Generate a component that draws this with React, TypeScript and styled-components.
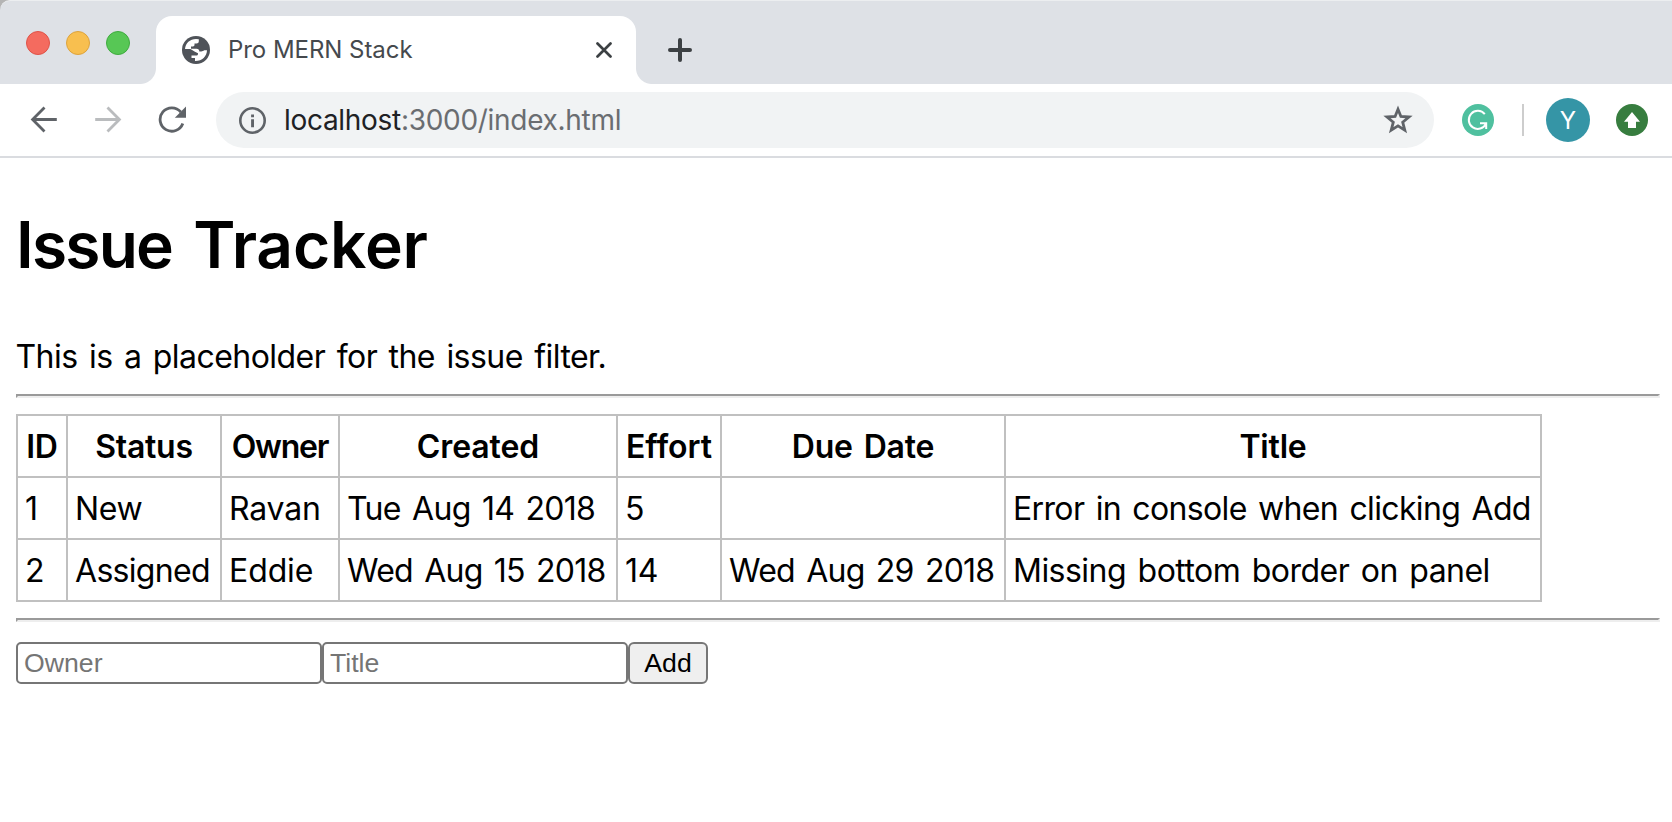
import React from "react";
import styled, { createGlobalStyle } from "styled-components";

const GlobalStyle = createGlobalStyle`
  * { box-sizing: border-box; }
  html { background: #fff; }
  body { margin: 0; background: #fff; color: #000; font-family: Inter, "Liberation Sans", sans-serif; }
`;

const Window = styled.div`
  width: 1672px;
  height: 822px;
  overflow: hidden;
  background: #fff;
`;

const Backdrop = styled.div`
  background: #b4b4b4;
`;

const TabStrip = styled.div`
  display: flex;
  align-items: flex-end;
  height: 84px;
  padding-left: 26px;
  background: #dee1e6;
  border-top: 1px solid #eceef0;
  border-radius: 10px 0 0 0;
`;

const TrafficLights = styled.div`
  display: flex;
  align-self: flex-start;
  gap: 16px;
  width: 130px;
  margin-top: 30px;
`;

const Light = styled.span<{ $fill: string; $edge: string }>`
  width: 24px;
  height: 24px;
  border-radius: 50%;
  background: ${(p) => p.$fill};
  border: 1px solid ${(p) => p.$edge};
`;

const Tab = styled.div`
  position: relative;
  display: flex;
  align-items: center;
  width: 480px;
  height: 68px;
  padding: 0 24px 0 26px;
  background: #fff;
  border-radius: 16px 16px 0 0;

  &::before,
  &::after {
    content: "";
    position: absolute;
    bottom: 0;
    width: 16px;
    height: 16px;
  }
  &::before {
    left: -16px;
    background: radial-gradient(circle at 0 0, transparent 15.5px, #fff 16.5px);
  }
  &::after {
    right: -16px;
    background: radial-gradient(circle at 100% 0, transparent 15.5px, #fff 16.5px);
  }
`;

const TabTitle = styled.span`
  flex: 1;
  margin-left: 18px;
  font-size: 24px;
  line-height: 30px;
  letter-spacing: -0.05px;
  color: #45494d;
`;

const NewTab = styled.div`
  display: flex;
  align-items: center;
  height: 68px;
  margin-left: 32px;
`;

const Toolbar = styled.div`
  display: flex;
  align-items: center;
  height: 74px;
  padding: 0 24px 2px 30px;
  border-bottom: 2px solid #dadce0;
`;

const NavIcons = styled.div`
  display: flex;
  gap: 36px;
  width: 186px;
`;

const Omnibox = styled.div`
  display: flex;
  align-items: center;
  width: 1218px;
  height: 56px;
  padding: 0 21px 0 22px;
  margin-top: 2px;
  background: #f1f3f4;
  border-radius: 28px;
`;

const Url = styled.span`
  flex: 1;
  margin-left: 18px;
  font-size: 28px;
  line-height: 36px;
  letter-spacing: -0.3px;
  color: #6a6d71;
`;

const Host = styled.span`
  color: #202124;
`;

const Extensions = styled.div`
  display: flex;
  align-items: center;
  margin: 2px 0 0 28px;
`;

const Divider = styled.span`
  width: 2px;
  height: 32px;
  margin: 0 22px 0 28px;
  background: #cdcdcd;
`;

const Avatar = styled.span`
  width: 44px;
  height: 44px;
  margin-right: 26px;
  border-radius: 50%;
  background: #3595a6;
  color: #fff;
  font-size: 24px;
  line-height: 45px;
  text-align: center;
`;

const Page = styled.main`
  padding: 0 12px 0 16px;
`;

const Heading = styled.h1`
  margin: 42px 0 44px;
  font-size: 64px;
  font-weight: 600;
  line-height: 90px;
  word-spacing: 5px;
`;

const HeadingWord = styled.span<{ $tracking: number }>`
  letter-spacing: ${(p) => p.$tracking}px;
`;

const Filter = styled.div`
  padding-top: 2px;
  font-size: 32px;
  line-height: 42px;
  height: 44px;
  letter-spacing: -0.55px;
  word-spacing: 3px;
  text-indent: -0.5px;
`;

const Rule = styled.hr`
  height: 4px;
  margin: 16px 0;
  border: 2px solid;
  border-color: #9a9a9a #eee #eee #9a9a9a;
`;

const Table = styled.table`
  width: 1526px;
  table-layout: fixed;
  border-collapse: collapse;
  font-size: 32px;
  line-height: 44px;
  white-space: nowrap;
`;

const Column = styled.col<{ $width: number }>`
  width: ${(p) => p.$width}px;
`;

const HeadCell = styled.th<{ $tracking: number }>`
  height: 62px;
  padding: 2px 0 0;
  border: 2px solid #c0c0c0;
  font-weight: 600;
  text-align: center;
  letter-spacing: ${(p) => p.$tracking}px;
  word-spacing: 3px;
`;

const Cell = styled.td<{ $tracking: number }>`
  height: 62px;
  padding: 2px 0 0 7px;
  border: 2px solid #c0c0c0;
  letter-spacing: ${(p) => p.$tracking}px;
  word-spacing: 3px;
`;

const Form = styled.form`
  display: flex;
  margin-top: 20px;
`;

const Field = styled.input`
  width: 306px;
  height: 42px;
  padding: 2px 6px;
  border: 2px solid #767676;
  border-radius: 5px;
  background: #fff;
  font: 26.67px "Liberation Sans", Arial, sans-serif;

  &::placeholder {
    color: #757575;
    opacity: 1;
  }
`;

const AddButton = styled.button`
  width: 80px;
  height: 42px;
  padding: 0;
  border: 2px solid #767676;
  border-radius: 6px;
  background: #efefef;
  color: #000;
  font: 26.67px "Liberation Sans", Arial, sans-serif;
`;

const columns = [
  { label: "ID", width: 50, tracking: -0.3 },
  { label: "Status", width: 154, tracking: -0.3 },
  { label: "Owner", width: 118, tracking: -1.2 },
  { label: "Created", width: 278, tracking: -0.1 },
  { label: "Effort", width: 104, tracking: 0 },
  { label: "Due Date", width: 284, tracking: -0.2 },
  { label: "Title", width: 536, tracking: -0.2 },
];

type CellData = [text: string, tracking: number];

const issues: CellData[][] = [
  [["1", 0], ["New", -0.4], ["Ravan", -0.2], ["Tue Aug 14 2018", -0.7], ["5", 0], ["", 0], ["Error in console when clicking Add", -0.65]],
  [["2", 0], ["Assigned", -0.7], ["Eddie", -0.1], ["Wed Aug 15 2018", -0.75], ["14", -0.3], ["Wed Aug 29 2018", -0.75], ["Missing bottom border on panel", -0.52]],
];

const GlobeIcon = () => (
  <svg width="28" height="28" viewBox="0 0 28 28">
    <circle cx="14" cy="14" r="14" fill="#4f5359" />
    <path
      d="M3 13C3.400 7.200 8 3 14 3l2.800.3v1.900c0 1.300-1 2.300-2.300 2.300h-2v1.300c0 .9-.7 1.600-1.600 1.600H9v2.400h5.500c1.900 0 2.800 1.100 2.800 2.700h1.900c1.200 0 2.200-.5 3-1.200H25C24.800 20.500 20 25.200 13 25v-3H9.500v-2.500h5c.9 0 1.500-.6 1.500-1.500v-.8L12.500 15.500 8.500 13Z"
      fill="#fff"
    />
  </svg>
);

const CloseIcon = () => (
  <svg width="16" height="16" viewBox="0 0 16 16" stroke="#3c4043" strokeWidth="2.700" strokeLinecap="round">
    <path d="M1.500 1.500 14.500 14.500M14.500 1.500 1.500 14.500" />
  </svg>
);

const PlusIcon = () => (
  <svg width="24" height="24" viewBox="0 0 24 24" stroke="#3c4043" strokeWidth="4" strokeLinecap="round">
    <path d="M12 2v20M2 12h20" />
  </svg>
);

const BackIcon = () => (
  <svg width="28" height="28" viewBox="0 0 28 28" fill="none" stroke="#5f6368" strokeWidth="2.800">
    <path d="M26.800 14.500H3M14.500 2.500 2.600 14.500l11.900 12" />
  </svg>
);

const ForwardIcon = () => (
  <svg width="28" height="28" viewBox="0 0 28 28" fill="none" stroke="#babcbe" strokeWidth="2.800">
    <path d="M1.200 14.500h24M13.500 2.500l11.900 12-11.900 12" />
  </svg>
);

const ReloadIcon = () => (
  <svg width="28" height="28" viewBox="0 0 28 28">
    <path d="M24.800 18.500A11.700 11.700 0 1 1 22.800 7" fill="none" stroke="#5f6368" strokeWidth="2.800" />
    <path d="M28 1.500v11.200H16.800z" fill="#5f6368" />
  </svg>
);

const InfoIcon = () => (
  <svg width="28" height="28" viewBox="0 0 28 28">
    <circle cx="14.500" cy="14.500" r="12.200" fill="none" stroke="#5f6368" strokeWidth="2.600" />
    <path d="M13.100 8.500H16v2.800h-2.900zM13.100 13.200H16v8h-2.900z" fill="#5f6368" />
  </svg>
);

const StarIcon = () => (
  <svg width="30" height="30" viewBox="0 0 30 30">
    <path
      d="M15 4.200 17.900 11.500 26 12 19.700 17.200 21.800 25.200 15 20.900 8.200 25.200 10.300 17.200 4 12 12.100 11.500Z"
      fill="none"
      stroke="#5f6368"
      strokeWidth="2.800"
    />
  </svg>
);

const GrammarlyIcon = () => (
  <svg width="32" height="32" viewBox="0 0 32 32">
    <circle cx="16" cy="16" r="16" fill="#4fc09f" />
    <path d="M22.800 10.200A9 9 0 1 0 24 19.600M18 19.200h6.200V25" fill="none" stroke="#fff" strokeWidth="2" />
  </svg>
);

const UpdateIcon = () => (
  <svg width="32" height="32" viewBox="0 0 32 32">
    <circle cx="16" cy="16" r="16" fill="#377d3f" />
    <path d="M16 8 24 17.700H20V24H12V17.700H8Z" fill="#fff" />
  </svg>
);

export default function App() {
  return (
    <Window>
      <GlobalStyle />
      <Backdrop>
        <TabStrip>
          <TrafficLights>
            <Light $fill="#f46b5f" $edge="#df5348" />
            <Light $fill="#f8bf4f" $edge="#dda33d" />
            <Light $fill="#57c755" $edge="#3fab3f" />
          </TrafficLights>
          <Tab>
            <GlobeIcon />
            <TabTitle>Pro MERN Stack</TabTitle>
            <CloseIcon />
          </Tab>
          <NewTab>
            <PlusIcon />
          </NewTab>
        </TabStrip>
      </Backdrop>
      <Toolbar>
        <NavIcons>
          <BackIcon />
          <ForwardIcon />
          <ReloadIcon />
        </NavIcons>
        <Omnibox>
          <InfoIcon />
          <Url>
            <Host>localhost</Host>:3000/index.html
          </Url>
          <StarIcon />
        </Omnibox>
        <Extensions>
          <GrammarlyIcon />
          <Divider />
          <Avatar>Y</Avatar>
          <UpdateIcon />
        </Extensions>
      </Toolbar>
      <Page>
        <Heading>
          <HeadingWord $tracking={-1.8}>Issue</HeadingWord> <HeadingWord $tracking={-0.15}>Tracker</HeadingWord>
        </Heading>
        <Filter>This is a placeholder for the issue filter.</Filter>
        <Rule />
        <Table>
          <colgroup>
            {columns.map((c) => (
              <Column key={c.label} $width={c.width} />
            ))}
          </colgroup>
          <thead>
            <tr>
              {columns.map((c) => (
                <HeadCell key={c.label} $tracking={c.tracking}>
                  {c.label}
                </HeadCell>
              ))}
            </tr>
          </thead>
          <tbody>
            {issues.map((row, i) => (
              <tr key={i}>
                {row.map(([text, tracking], j) => (
                  <Cell key={j} $tracking={tracking}>
                    {text}
                  </Cell>
                ))}
              </tr>
            ))}
          </tbody>
        </Table>
        <Rule />
        <Form>
          <Field type="text" placeholder="Owner" />
          <Field type="text" placeholder="Title" />
          <AddButton type="button">Add</AddButton>
        </Form>
      </Page>
    </Window>
  );
}
